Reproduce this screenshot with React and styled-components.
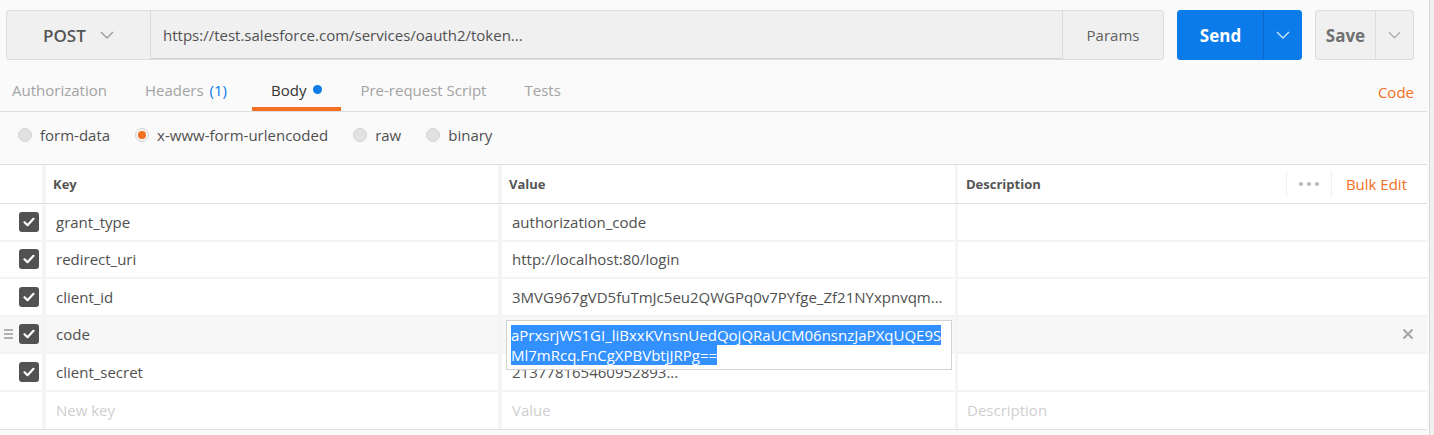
import React from 'react';
import styled, { createGlobalStyle } from 'styled-components';

const ORANGE = '#f47023';
const BLUE = '#0b7bea';
const SEP = '#f4f4f4';

const GlobalStyle = createGlobalStyle`
  html, body { margin: 0; padding: 0; }
  body {
    background: #fafafa;
    font-family: "Open Sans", "Liberation Sans", sans-serif;
    color: #505050;
    overflow: hidden;
  }
  * { box-sizing: border-box; }
`;

const Page = styled.div`
  display: flex;
  height: 435px;
`;

const Main = styled.div`
  flex: 1;
  min-width: 0;
  display: flex;
  flex-direction: column;
`;

const ScrollTrack = styled.div`
  width: 5px;
  margin-left: 2px;
  border-left: 1px solid #dadada;
  background: #f0f0f0;
`;

/* ---------- top bar ---------- */
const TopBar = styled.div`
  display: flex;
  gap: 13px;
  height: 60px;
  padding: 10px 13px 0 6px;
`;

const UrlGroup = styled.div`
  flex: 1;
  display: flex;
  border: 1px solid #dcdcdc;
  border-radius: 3px;
  background: #f0f0f0;
  overflow: hidden;
`;

const Method = styled.div`
  flex: 0 0 144px;
  display: flex;
  align-items: center;
  gap: 14px;
  padding-left: 36px;
  border-right: 1px solid #dcdcdc;
  font-size: 17px;
  font-weight: 600;
  color: #555;
`;

const UrlInput = styled.div`
  flex: 1;
  display: flex;
  align-items: center;
  padding-left: 12px;
  font-size: 15px;
  color: #505050;
  border-bottom: 1px solid #d4d4d4;
`;

const ParamsButton = styled.div`
  flex: 0 0 101px;
  display: flex;
  align-items: center;
  justify-content: center;
  border-left: 1px solid #dcdcdc;
  font-size: 15px;
  color: #606060;
`;

const SplitButton = styled.div`
  display: flex;
  width: ${p => p.$width}px;
  border-radius: 3px;
  background: ${p => (p.$primary ? BLUE : '#f0f0f0')};
  border: 1px solid ${p => (p.$primary ? BLUE : '#dcdcdc')};
  color: ${p => (p.$primary ? '#fff' : '#707070')};
  overflow: hidden;
`;

const SplitMain = styled.div`
  flex: 1;
  display: flex;
  align-items: center;
  justify-content: center;
  font-size: 17px;
  font-weight: 700;
`;

const SplitArrow = styled.div`
  flex: 0 0 38px;
  display: flex;
  align-items: center;
  justify-content: center;
  border-left: 1px solid ${p => (p.$primary ? '#0a67c6' : '#dcdcdc')};
`;

const Chevron = ({ color, w = 14 }) => (
  <svg width={w} height="8" viewBox="0 0 14 8" fill="none">
    <path d="M1 1l6 6 6-6" stroke={color} strokeWidth="1.4" />
  </svg>
);

/* ---------- tabs ---------- */
const TabsBar = styled.div`
  display: flex;
  align-items: stretch;
  justify-content: space-between;
  height: 42px;
  margin-top: 10px;
  border-bottom: 1px solid #e0e0e0;
`;

const Tabs = styled.div`
  display: flex;
`;

const Tab = styled.div`
  display: flex;
  align-items: center;
  gap: 6px;
  padding: 0 19px 2px;
  font-size: 15px;
  color: ${p => (p.$active ? '#333' : '#a3a3a3')};
  box-shadow: ${p => (p.$active ? `inset 0 -4px 0 ${ORANGE}` : 'none')};
  &:first-child { padding-left: 12px; }
`;

const Count = styled.span`
  color: ${BLUE};
  margin-right: 6px;
`;

const Dot = styled.span`
  width: 9px;
  height: 9px;
  border-radius: 50%;
  background: ${BLUE};
  margin-left: 1px;
`;

const CodeLink = styled.div`
  display: flex;
  align-items: center;
  padding: 2px 13px 0 0;
  font-size: 15px;
  color: ${ORANGE};
`;

/* ---------- radios ---------- */
const RadioRow = styled.div`
  display: flex;
  align-items: center;
  gap: 25px;
  height: 52px;
  padding: 0 0 6px 18px;
`;

const RadioOption = styled.label`
  display: flex;
  align-items: center;
  gap: 8px;
  font-size: 15px;
  color: #505050;
`;

const RadioCircle = styled.span`
  width: 14px;
  height: 14px;
  border-radius: 50%;
  background: #e2e2e2;
  border: 1px solid #d3d3d3;
  display: flex;
  align-items: center;
  justify-content: center;
  margin-top: -1px;
  &::after {
    content: '';
    display: ${p => (p.$checked ? 'block' : 'none')};
    width: 8px;
    height: 8px;
    border-radius: 50%;
    background: ${ORANGE};
  }
  ${p => p.$checked && 'background: #f4f4f4;'}
`;

/* ---------- table ---------- */
const Table = styled.div`
  background: #fff;
  border-top: 1px solid #e0e0e0;
  border-bottom: 1px solid #dedede;
`;

const GridRow = styled.div`
  display: grid;
  grid-template-columns: 46px 456px 456px 1fr;
  height: ${p => p.$h}px;
  background: ${p => (p.$active ? '#f7f7f7' : '#fff')};
  border-bottom: ${p => (p.$sep ? `${p.$sep}px solid ${p.$sepColor || SEP}` : 'none')};
`;

const Cell = styled.div`
  position: relative;
  display: flex;
  align-items: center;
  min-width: 0;
  padding-left: ${p => p.$pad || 0}px;
  border-right: ${p => (p.$sep ? `${p.$sep}px solid ${SEP}` : 'none')};
  font-size: 15px;
  color: ${p => (p.$placeholder ? '#cfcfcf' : '#505050')};
  white-space: nowrap;
`;

const HeadCell = styled(Cell)`
  font-size: 13px;
  font-weight: 700;
  color: #555;
  padding-bottom: 1px;
`;

const HeadTools = styled.div`
  margin-left: auto;
  display: flex;
  align-items: center;
  height: 26px;
  padding-right: 20px;
`;

const MoreButton = styled.div`
  width: 46px;
  height: 100%;
  display: flex;
  align-items: center;
  justify-content: center;
  gap: 4px;
  border-left: 1px solid #f0f0f0;
  border-right: 1px solid #f0f0f0;
  & > span {
    width: 4px;
    height: 4px;
    border-radius: 50%;
    background: #b8b8b8;
  }
`;

const BulkEdit = styled.div`
  padding-left: 14px;
  font-size: 15px;
  font-weight: 400;
  color: ${ORANGE};
`;

const CheckCellInner = styled.div`
  display: flex;
  align-items: center;
  gap: 6px;
  padding-left: 4px;
`;

const DragHandle = styled.div`
  width: 9px;
  display: flex;
  flex-direction: column;
  gap: 2px;
  visibility: ${p => (p.$show ? 'visible' : 'hidden')};
  & > span {
    height: 2px;
    background: #b0b0b0;
  }
`;

const CheckBox = styled.span`
  width: 20px;
  height: 20px;
  border-radius: 3px;
  background: #525252;
  display: flex;
  align-items: center;
  justify-content: center;
`;

const RemoveButton = styled.div`
  margin-left: auto;
  margin-right: 13px;
  display: flex;
  align-items: center;
`;

const EditPopup = styled.div`
  position: absolute;
  left: 4px;
  top: 3px;
  width: 446px;
  height: 50px;
  z-index: 2;
  background: #fff;
  border: 1px solid #d2d2d2;
  padding: 4px 4px;
  font-size: 15px;
  line-height: 20px;
  white-space: normal;
`;

const Selected = styled.span`
  background: #3390ff;
  color: #fff;
`;

const rows = [
  { key: 'grant_type', value: 'authorization_code' },
  { key: 'redirect_uri', value: 'http://localhost:80/login' },
  { key: 'client_id', value: '3MVG967gVD5fuTmJc5eu2QWGPq0v7PYfge_Zf21NYxpnvqm...' },
  { key: 'code', value: '', active: true },
  { key: 'client_secret', value: '213778165460952893...' },
];

const CheckIcon = () => (
  <svg width="12" height="10" viewBox="0 0 12 10" fill="none">
    <path d="M1.5 5.2l3 3 6-6.4" stroke="#fff" strokeWidth="2.2" strokeLinecap="round" strokeLinejoin="round" />
  </svg>
);

const CloseIcon = () => (
  <svg width="12" height="12" viewBox="0 0 12 12">
    <path d="M1.5 1.5l9 9M10.5 1.5l-9 9" stroke="#a8a8a8" strokeWidth="2.2" />
  </svg>
);

export default function App() {
  return (
    <>
      <GlobalStyle />
      <Page>
        <Main>
          <TopBar>
            <UrlGroup>
              <Method>
                POST
                <Chevron color="#9a9a9a" />
              </Method>
              <UrlInput>https://test.salesforce.com/services/oauth2/token...</UrlInput>
              <ParamsButton>Params</ParamsButton>
            </UrlGroup>
            <SplitButton $primary $width={125}>
              <SplitMain>Send</SplitMain>
              <SplitArrow $primary>
                <Chevron color="#cfe2fb" />
              </SplitArrow>
            </SplitButton>
            <SplitButton $width={99}>
              <SplitMain>Save</SplitMain>
              <SplitArrow>
                <Chevron color="#ababab" w={13} />
              </SplitArrow>
            </SplitButton>
          </TopBar>

          <TabsBar>
            <Tabs>
              <Tab>Authorization</Tab>
              <Tab>
                Headers <Count>(1)</Count>
              </Tab>
              <Tab $active>
                Body <Dot />
              </Tab>
              <Tab>Pre-request Script</Tab>
              <Tab>Tests</Tab>
            </Tabs>
            <CodeLink>Code</CodeLink>
          </TabsBar>

          <RadioRow>
            <RadioOption><RadioCircle />form-data</RadioOption>
            <RadioOption><RadioCircle $checked />x-www-form-urlencoded</RadioOption>
            <RadioOption><RadioCircle />raw</RadioOption>
            <RadioOption><RadioCircle />binary</RadioOption>
          </RadioRow>

          <Table>
            <GridRow $h={39} $sep={1} $sepColor="#e0e0e0">
              <HeadCell $sep={4} />
              <HeadCell $sep={4} $pad={7}>Key</HeadCell>
              <HeadCell $sep={3} $pad={7}>Value</HeadCell>
              <HeadCell $pad={8}>
                Description
                <HeadTools>
                  <MoreButton><span /><span /><span /></MoreButton>
                  <BulkEdit>Bulk Edit</BulkEdit>
                </HeadTools>
              </HeadCell>
            </GridRow>

            {rows.map(r => (
              <GridRow key={r.key} $h={37.5} $sep={2} $active={r.active}>
                <Cell $sep={4}>
                  <CheckCellInner>
                    <DragHandle $show={r.active}><span /><span /><span /></DragHandle>
                    <CheckBox><CheckIcon /></CheckBox>
                  </CheckCellInner>
                </Cell>
                <Cell $sep={4} $pad={10}>{r.key}</Cell>
                <Cell $sep={3} $pad={10}>
                  {r.value}
                  {r.active && (
                    <EditPopup>
                      <Selected>aPrxsrjWS1GI_liBxxKVnsnUedQojQRaUCM06nsnzJaPXqUQE9S</Selected>
                      <br />
                      <Selected>Ml7mRcq.FnCgXPBVbtjJRPg==</Selected>
                    </EditPopup>
                  )}
                </Cell>
                <Cell $pad={9}>
                  {r.active && (
                    <RemoveButton><CloseIcon /></RemoveButton>
                  )}
                </Cell>
              </GridRow>
            ))}

            <GridRow $h={37}>
              <Cell $sep={4} />
              <Cell $sep={4} $pad={10} $placeholder>New key</Cell>
              <Cell $sep={3} $pad={10} $placeholder>Value</Cell>
              <Cell $pad={9} $placeholder>Description</Cell>
            </GridRow>
          </Table>
        </Main>
        <ScrollTrack />
      </Page>
    </>
  );
}
